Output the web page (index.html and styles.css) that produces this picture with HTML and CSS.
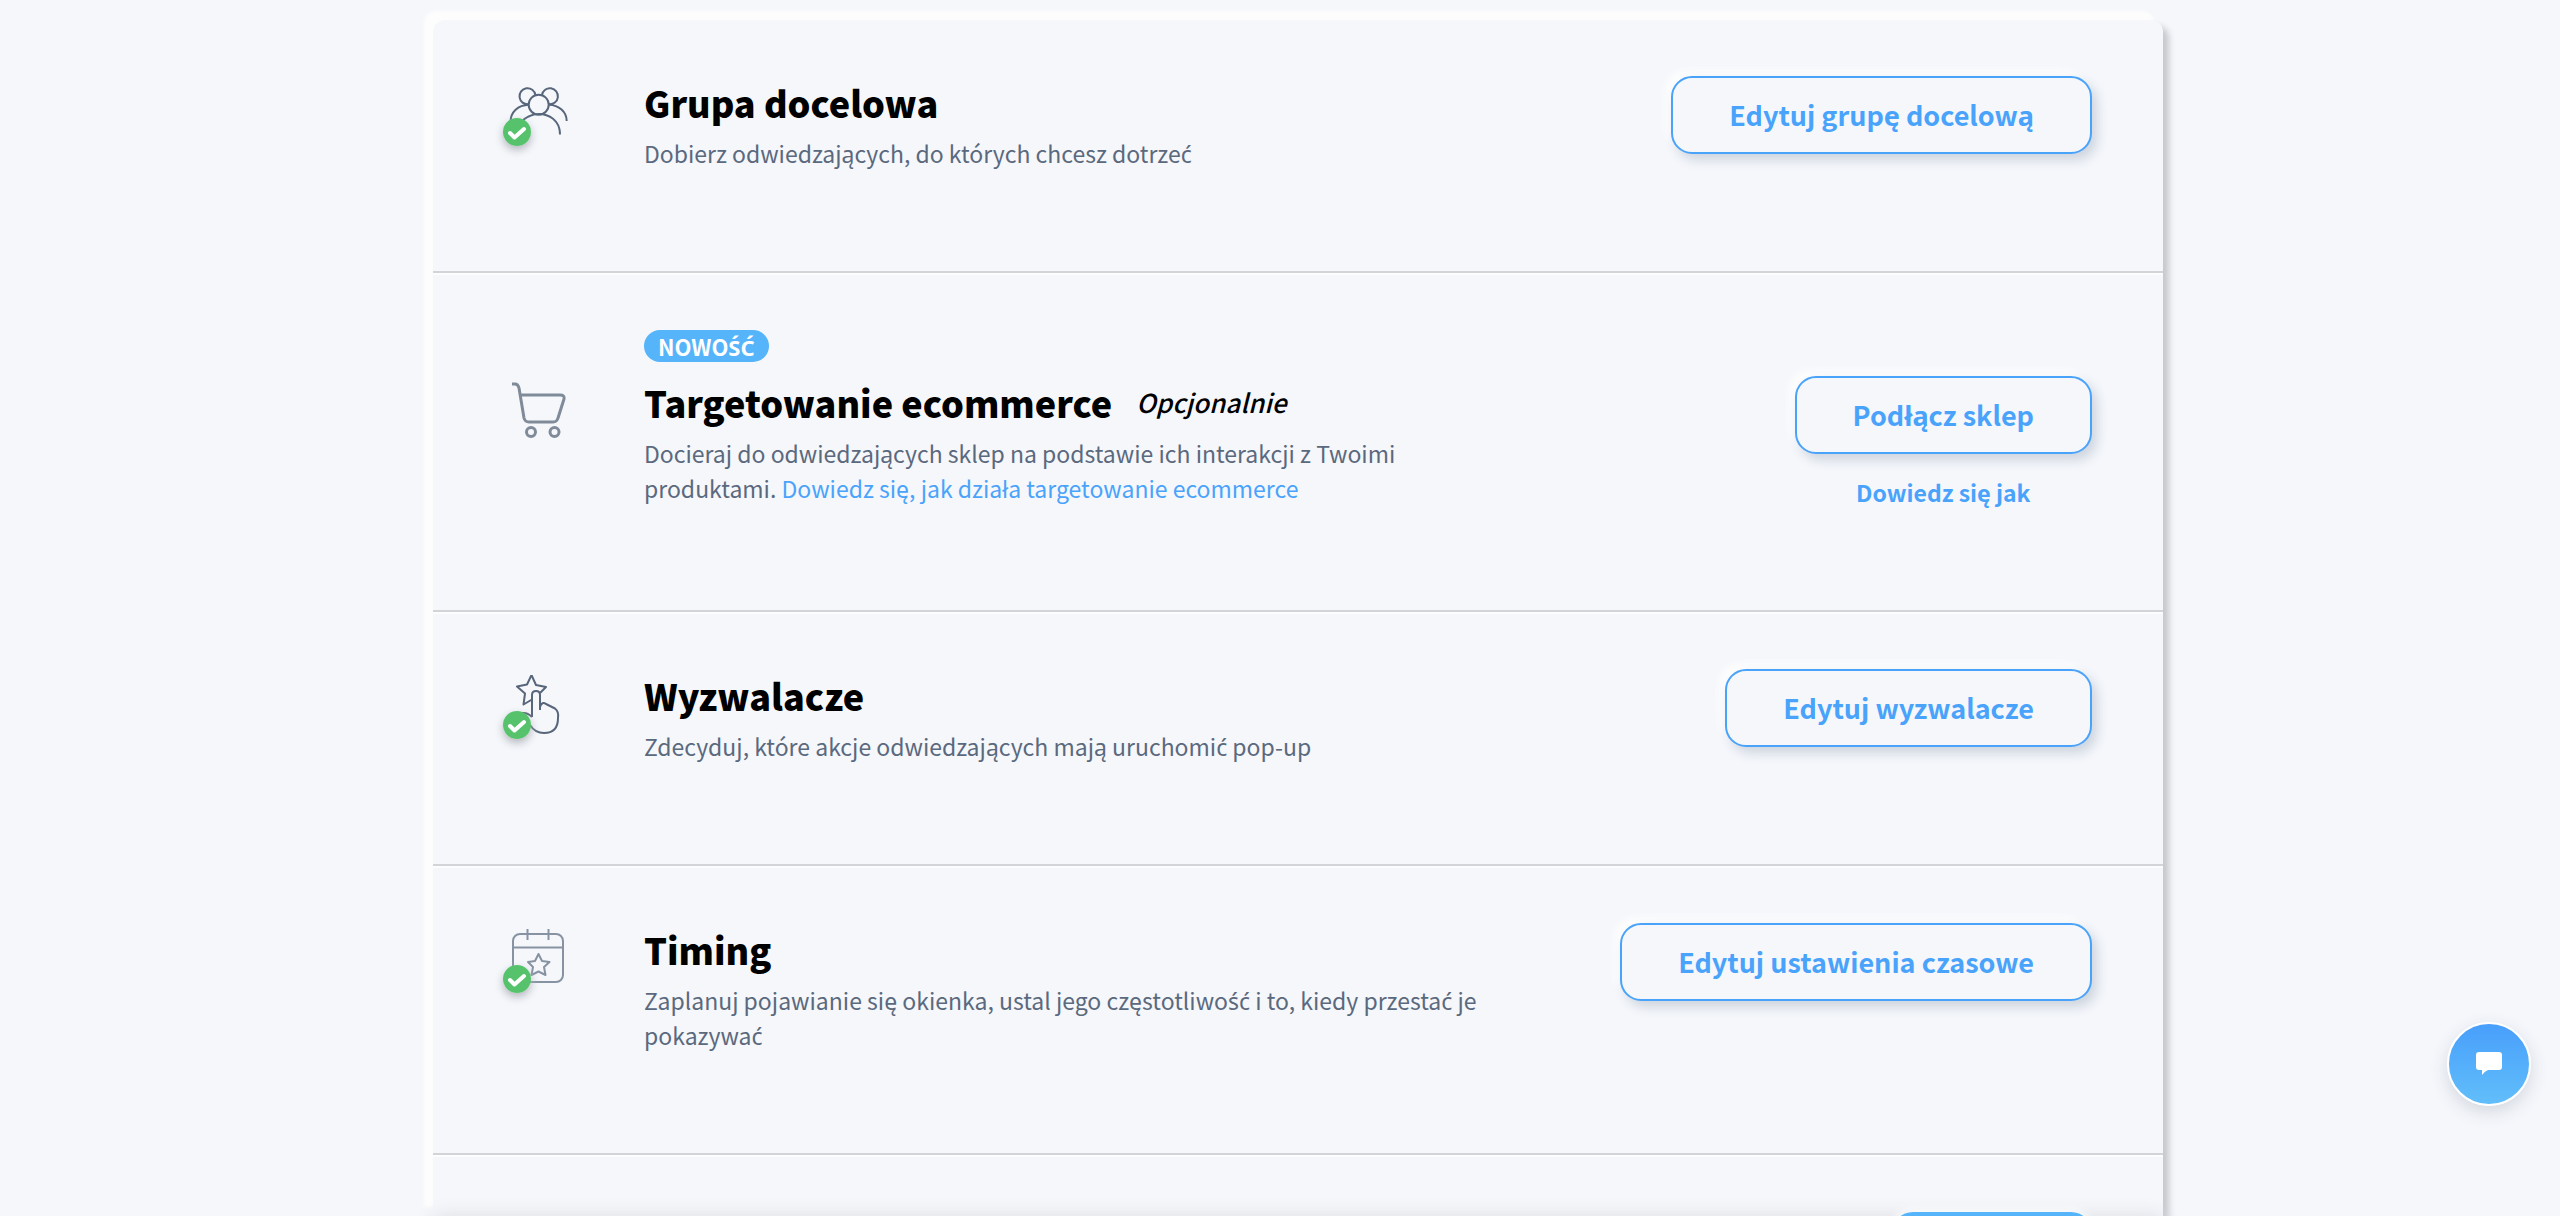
FILE: index.html
```html
<!DOCTYPE html>
<html lang="pl">
<head>
<meta charset="utf-8">
<title>Ustawienia kampanii</title>
<meta name="viewport" content="width=device-width, initial-scale=1">
<link rel="stylesheet" href="styles.css">
</head>
<body>
<main class="settings">
  <section class="row">
    <div class="icon">
      <svg class="glyph" viewBox="0 0 68 64" aria-hidden="true"><circle cx="30.700" cy="22.700" r="10"/><path d="M20.500 22.200A8 8 0 1 1 27.400 13M34 13A8 8 0 1 1 41 22.200M2.500 40C2.500 30 10 23 20.800 22.700M40.800 22.700C51 23 58.700 30 58.700 39M15 38C30 26 52 33 52 52.500"/></svg>
      <svg class="check" viewBox="0 0 28 28" aria-hidden="true"><circle cx="14" cy="14" r="14"/><path d="M7 15l4.500 4.500L21 11"/></svg>
    </div>
    <div class="text">
      <h2 class="title">Grupa docelowa</h2>
      <p class="desc">Dobierz odwiedzających, do których chcesz dotrze<span class="acute">ć</span></p>
    </div>
    <div class="actions"><button class="button" type="button">Edytuj grupę docelową</button></div>
  </section>

  <section class="row">
    <span class="badge">NOWO<span class="acute">ŚĆ</span></span>
    <div class="icon">
      <svg class="glyph cart" viewBox="0 0 68 64" aria-hidden="true"><path d="M4 2h3q3 0 4 4l5 30q1 4 5 4h24q4 0 5-4l6-19q1-4-4-4H12"/><circle cx="23" cy="50" r="4.500"/><circle cx="46.500" cy="50" r="4.500"/></svg>
    </div>
    <div class="text">
      <h2 class="title">Targetowanie ecommerce<em class="optional">Opcjonalnie</em></h2>
      <p class="desc">Docieraj do odwiedzających sklep na podstawie ich interakcji z Twoimi produktami. <a class="inline-link" href="#ecommerce">Dowiedz się, jak działa targetowanie ecommerce</a></p>
    </div>
    <div class="actions">
      <button class="button" type="button">Podłącz sklep</button>
      <a class="help" href="#jak">Dowiedz się jak</a>
    </div>
  </section>

  <section class="row">
    <div class="icon">
      <svg class="glyph" viewBox="0 4 68 64" aria-hidden="true"><path d="M24 28.500l-8.500 5 1.500-11-8-7 10-2 4.500-9.500L28 14l10 2-6 6"/><path d="M24 46V24q0-4 4-4t4 4v15M24 46q-6-6-13-3M32 36q2-6 6-3l9 4.500q4 3 3 9.500 0 15-14 15-9 0-14-8"/></svg>
      <svg class="check" viewBox="0 0 28 28" aria-hidden="true"><circle cx="14" cy="14" r="14"/><path d="M7 15l4.500 4.500L21 11"/></svg>
    </div>
    <div class="text">
      <h2 class="title">Wyzwalacze</h2>
      <p class="desc">Zdecyduj, które akcje odwiedzających mają uruchomi<span class="acute">ć</span> pop-up</p>
    </div>
    <div class="actions"><button class="button" type="button">Edytuj wyzwalacze</button></div>
  </section>

  <section class="row">
    <div class="icon">
      <svg class="glyph calendar" viewBox="0 5 68 64" aria-hidden="true"><rect x="5" y="10" width="50" height="48" rx="7"/><path d="M5 23.500h50M19.500 5v11M40.500 5v11M30.500 30l3.500 7 7.500 1-5.500 5 1.500 8-7-3.500-7 3.500 1.500-8-5-5 7-1z"/></svg>
      <svg class="check" viewBox="0 0 28 28" aria-hidden="true"><circle cx="14" cy="14" r="14"/><path d="M7 15l4.500 4.500L21 11"/></svg>
    </div>
    <div class="text">
      <h2 class="title">Timing</h2>
      <p class="desc">Zaplanuj pojawianie się okienka, ustal jego częstotliwo<span class="acute">ść</span> i to, kiedy przesta<span class="acute">ć</span> je pokazywa<span class="acute">ć</span></p>
    </div>
    <div class="actions"><button class="button" type="button">Edytuj ustawienia czasowe</button></div>
  </section>
  <section class="row"></section>
</main>

<footer class="save-bar"><button class="save" type="button" aria-label="Zapisz"></button></footer>
<button class="chat" type="button" aria-label="Czat">
  <svg class="chat-icon" viewBox="0 0 26 24" aria-hidden="true"><path d="M3 0h20q3 0 3 3v12q0 3-3 3H12q-3 1-6 5v-5H3q-3 0-3-3V3q0-3 3-3z"/></svg>
</button>
</body>
</html>
```
FILE: styles.css
```css
* { box-sizing: border-box; }

body {
  display: flex;
  flex-direction: column;
  height: 100vh;
  margin: 0;
  padding: 20px 397px 0 433px;
  overflow: hidden;
  background: #f5f7fb;
  color: #000;
  font-family: "Noto Sans CJK JP", "Noto Sans", sans-serif;
}

.settings {
  display: flex;
  flex: 1;
  flex-direction: column;
  border-radius: 12px 12px 0 0;
  background: #f5f7fb;
  box-shadow: 6px 6px 6px #c6c8cd, -9px -9px 3px #fdfdfd;
}

.row {
  display: grid;
  flex: none;
  grid-template-columns: 68px minmax(0, 870px) minmax(max-content, 1fr);
  column-gap: 68px;
  padding: 57px 71px 100px 75px;
  border-top: 2px solid #d3d4d8;
  box-shadow: inset 0 2px 0 #fcfdfe;
}

.row:first-child {
  padding-top: 56px;
  border-top: 0;
  box-shadow: none;
}

.row:last-child {
  flex: 1;
  padding: 0;
}

.icon {
  position: relative;
  width: 68px;
  height: 72px;
}

.glyph {
  display: block;
  width: 68px;
  height: 64px;
  margin-top: 6px;
  fill: none;
  stroke: #58667b;
  stroke-width: 2;
  stroke-linejoin: round;
}

.cart {
  stroke: #808b9a;
  stroke-width: 3;
}

.calendar { stroke: #8793a3; }

.check {
  position: absolute;
  left: -5px;
  top: 42px;
  width: 28px;
  height: 28px;
  overflow: visible;
  border-radius: 50%;
  box-shadow: 0 4px 8px #b4b7bd;
  fill: #57c26c;
}

.check path {
  fill: none;
  stroke: #fff;
  stroke-width: 4;
  stroke-linecap: round;
  stroke-linejoin: round;
}

.badge {
  grid-column: 2 / 4;
  justify-self: start;
  height: 32px;
  margin-bottom: 14px;
  padding: 0 14px;
  border-radius: 16px;
  background: #55b4fa;
  color: #fff;
  font-size: 22px;
  font-weight: 700;
  line-height: 32px;
}

.badge ~ .icon { grid-column: 1; }

/* The CJK face has no Ś or Ć of its own */
.acute {
  font-family: "Noto Sans", sans-serif;
  line-height: 1;
}

.title {
  display: flex;
  align-items: center;
  gap: 24px;
  margin: 0 0 8px;
  font-size: 36px;
  font-weight: 900;
  line-height: 52px;
}

.optional {
  font-size: 26px;
  font-weight: 500;
}

.desc {
  margin: 0;
  color: #5b697e;
  font-size: 23px;
  line-height: 35px;
}

.inline-link {
  color: #4aa3fb;
  text-decoration: none;
}

.actions {
  display: flex;
  flex-direction: column;
  align-items: center;
  justify-self: end;
  gap: 20px;
}

.button {
  height: 78px;
  padding: 0 56px;
  border: 2px solid #4aa3fb;
  border-radius: 21px;
  background: #f5f7fb;
  box-shadow: 5px 6px 12px #cdd4de, -6px -6px 6px #fdfdfd;
  color: #4aa3fb;
  font: 700 27px/40px "Noto Sans CJK JP", "Noto Sans", sans-serif;
  white-space: nowrap;
}

.help {
  color: #4aa3fb;
  font-size: 23px;
  font-weight: 700;
  line-height: 36px;
  text-decoration: none;
}

/* Bar parked below the fold, its top edge peeks into view */
.save-bar {
  position: fixed;
  left: 433px;
  right: 397px;
  bottom: -78px;
  display: flex;
  justify-content: flex-end;
  height: 78px;
  padding-right: 71px;
  box-shadow: 0 0 18px #dcdee3;
}

.save {
  width: 200px;
  height: 78px;
  margin-top: -4px;
  border: 0;
  border-radius: 21px;
  background: #55b4fa;
  box-shadow: 0 -2px 8px #fdfdfd;
}

.chat {
  position: fixed;
  right: 29px;
  bottom: 110px;
  display: grid;
  place-items: center;
  width: 84px;
  height: 84px;
  padding: 0;
  border: 2px solid #fff;
  border-radius: 50%;
  background: linear-gradient(#489efb, #62bffa) border-box;
  box-shadow: 0 6px 18px #d3d7df;
}

.chat-icon {
  width: 26px;
  height: 24px;
  fill: #fff;
}
```
